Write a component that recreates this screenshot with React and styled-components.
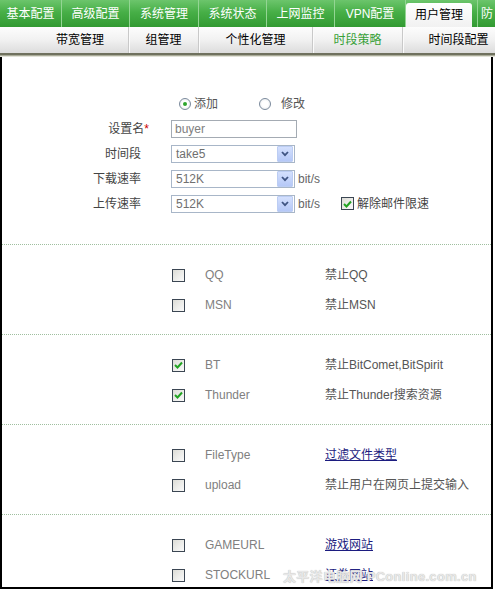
import styled, { createGlobalStyle, css } from 'styled-components'

const FONT = `"Liberation Sans", "Noto Sans CJK SC", sans-serif`

const GlobalStyle = createGlobalStyle`
    body {
        margin: 0;
        background: #fff;
        overflow: hidden;
    }
`

const Page = styled.div`
    position: relative;
    width: 495px;
    height: 589px;
    overflow: hidden;
    background: #fff;
    font-family: ${FONT};
    font-size: 12px;
    line-height: 1;
`

const TabBar = styled.div`
    display: flex;
    height: 27px;
    background: linear-gradient(#6cc56c, #47af47 45%, #329a32);
`

const Tab = styled.div`
    flex: 0 0 ${({ $w }) => $w}px;
    box-sizing: border-box;
    display: flex;
    align-items: center;
    justify-content: center;
    color: #fff;
    white-space: nowrap;
    overflow: hidden;
    border-right: 1px solid #93d593;
    ${({ $active }) => $active && css`
        margin-top: 3px;
        border-right: 0;
        border-radius: 3px 3px 0 0;
        color: #000;
        background: linear-gradient(#ffffff, #f1f1f1);
    `}
    ${({ $tail }) => $tail && css`
        margin-left: 5px;
        border-right: 0;
        border-left: 1px solid #93d593;
        justify-content: flex-start;
        padding-left: 3px;
    `}
`

const SubBar = styled.div`
    display: flex;
    height: 26px;
    padding-left: 32px;
    background: linear-gradient(#fdfdfd, #f1f1f1 50%, #dcdcdc);
`

const SubItem = styled.div`
    flex: 0 0 ${({ $w }) => $w}px;
    box-sizing: border-box;
    display: flex;
    align-items: center;
    justify-content: center;
    white-space: nowrap;
    color: ${({ $active }) => ($active ? '#37a037' : '#000')};
    ${({ $sep }) => $sep && css`
        border-left: 1px solid #c9c9c9;
        box-shadow: inset 1px 0 #fbfbfb;
    `}
`

const Shadow = styled.div`
    height: 4px;
    background: linear-gradient(#6f715e 0, #6f715e 2px, #a9ab98 2px, #a9ab98 3px, #e2e2d8 3px);
`

const Panel = styled.div`
    width: 493px;
    box-sizing: border-box;
    height: 532px;
    border: 2px solid #000;
    border-top: 0;
    overflow: hidden;
`

const Form = styled.div`
    padding: 34px 0 28px;
`

const Row = styled.div`
    display: flex;
    align-items: center;
    height: 25px;
`

const Label = styled.div`
    width: 139px;
    text-align: right;
    color: #444;
    white-space: nowrap;
`

const Star = styled.span`
    color: #c00;
    margin-right: -8px;
`

const Controls = styled.div`
    display: flex;
    align-items: center;
    margin-left: ${({ $indent }) => $indent ?? 30}px;
    color: #555;
`

const RadioDot = styled.span`
    box-sizing: border-box;
    width: 12px;
    height: 12px;
    border-radius: 50%;
    border: 1px solid #7b8a9c;
    background: radial-gradient(circle, #fff 40%, #dfe3e8);
    display: inline-flex;
    align-items: center;
    justify-content: center;
    &::after {
        content: '';
        width: 4px;
        height: 4px;
        border-radius: 50%;
        background: ${({ $on }) => ($on ? '#2ea52e' : 'transparent')};
    }
`

const RadioText = styled.span`
    margin-left: ${({ $gap }) => $gap}px;
    margin-right: ${({ $after }) => $after ?? 0}px;
    color: #555;
`

const TextBox = styled.div`
    box-sizing: border-box;
    width: 126px;
    height: 18px;
    border: 1px solid #a4abb3;
    padding-left: 3px;
    display: flex;
    align-items: center;
    color: #808080;
    font-size: 12px;
`

const SelectBox = styled.div`
    box-sizing: border-box;
    width: 124px;
    height: 18px;
    border: 1px solid #a8b6c8;
    display: flex;
    align-items: center;
    justify-content: space-between;
    padding-left: 4px;
    color: #707070;
`

const Arrow = styled.div`
    width: 14px;
    height: 14px;
    margin-right: 1px;
    border: 1px solid #bccdf3;
    border-radius: 1px;
    background: linear-gradient(#d4e0fd, #b5c8f7);
    display: flex;
    align-items: center;
    justify-content: center;
`

const Unit = styled.span`
    margin-left: 3px;
    color: #666;
`

const Box = styled.span`
    box-sizing: border-box;
    flex: 0 0 13px;
    width: 13px;
    height: 13px;
    border: 1px solid #3b4653;
    background: linear-gradient(135deg, #dcdcd6, #fbfbfb);
    display: inline-flex;
    align-items: center;
    justify-content: center;
`

const MailCheck = styled.label`
    display: flex;
    align-items: center;
    margin-left: 21px;
    color: #444;
    span + span {
        margin-left: 3px;
    }
`

const Section = styled.div`
    border-top: 1px dotted #9fbf9f;
    padding: 15px 0 14px;
`

const OptionRow = styled.div`
    display: grid;
    grid-template-columns: 13px 120px auto;
    column-gap: 20px;
    align-items: center;
    height: 30px;
    padding-left: 170px;
    white-space: nowrap;
`

const OptionName = styled.span`
    color: #808080;
`

const OptionDesc = styled.span`
    margin-left: -20px;
    color: #555;
`

const OptionLink = styled.a`
    margin-left: -20px;
    color: #1c1c80;
    text-decoration: underline;
`

const Watermark = styled.div`
    position: absolute;
    left: 283px;
    top: 570px;
    font-size: 13px;
    font-weight: bold;
    color: #e8e8e8;
    text-shadow: 0 0 1px #a8a8a8;
    white-space: nowrap;
    letter-spacing: 0.3px;
`

function Tick() {
    return (
        <svg width="9" height="8" viewBox="0 0 9 8">
            <path d="M1 4 L3.5 6.5 L8 1.5" fill="none" stroke="#22a322" strokeWidth="2" />
        </svg>
    )
}

function CheckBox({ checked }) {
    return <Box>{checked && <Tick />}</Box>
}

function Select({ value }) {
    return (
        <SelectBox>
            {value}
            <Arrow>
                <svg width="8" height="6" viewBox="0 0 8 6">
                    <path d="M1 1 L4 4.2 L7 1" fill="none" stroke="#3f5482" strokeWidth="1.8" />
                </svg>
            </Arrow>
        </SelectBox>
    )
}

const tabs = [
    { text: '基本配置', w: 62 },
    { text: '高级配置', w: 68 },
    { text: '系统管理', w: 69 },
    { text: '系统状态', w: 68 },
    { text: '上网监控', w: 68 },
    { text: 'VPN配置', w: 71 },
]

const subs = [
    { text: '带宽管理', w: 96 },
    { text: '组管理', w: 70 },
    { text: '个性化管理', w: 114 },
    { text: '时段策略', w: 90, active: true },
    { text: '时间段配置', w: 112 },
]

const sections = [
    [
        { name: 'QQ', desc: '禁止QQ' },
        { name: 'MSN', desc: '禁止MSN' },
    ],
    [
        { name: 'BT', desc: '禁止BitComet,BitSpirit', checked: true },
        { name: 'Thunder', desc: '禁止Thunder搜索资源', checked: true },
    ],
    [
        { name: 'FileType', link: '过滤文件类型' },
        { name: 'upload', desc: '禁止用户在网页上提交输入' },
    ],
    [
        { name: 'GAMEURL', link: '游戏网站' },
        { name: 'STOCKURL', link: '证券网站' },
    ],
]

function App() {
    return (
        <Page>
            <GlobalStyle />
            <TabBar>
                {tabs.map((t) => (
                    <Tab key={t.text} $w={t.w}>{t.text}</Tab>
                ))}
                <Tab $w={66} $active>用户管理</Tab>
                <Tab $w={30} $tail>防</Tab>
            </TabBar>
            <SubBar>
                {subs.map((s, i) => (
                    <SubItem key={s.text} $w={s.w} $sep={i > 0} $active={s.active}>{s.text}</SubItem>
                ))}
            </SubBar>
            <Shadow />
            <Panel>
                <Form>
                    <Row>
                        <Label />
                        <Controls $indent={38}>
                            <RadioDot $on />
                            <RadioText $gap={3} $after={41}>添加</RadioText>
                            <RadioDot />
                            <RadioText $gap={10}>修改</RadioText>
                        </Controls>
                    </Row>
                    <Row>
                        <Label>设置名<Star>*</Star></Label>
                        <Controls>
                            <TextBox>buyer</TextBox>
                        </Controls>
                    </Row>
                    <Row>
                        <Label>时间段</Label>
                        <Controls>
                            <Select value="take5" />
                        </Controls>
                    </Row>
                    <Row>
                        <Label>下载速率</Label>
                        <Controls>
                            <Select value="512K" />
                            <Unit>bit/s</Unit>
                        </Controls>
                    </Row>
                    <Row>
                        <Label>上传速率</Label>
                        <Controls>
                            <Select value="512K" />
                            <Unit>bit/s</Unit>
                            <MailCheck>
                                <CheckBox checked />
                                <span>解除邮件限速</span>
                            </MailCheck>
                        </Controls>
                    </Row>
                </Form>
                {sections.map((rows, i) => (
                    <Section key={i}>
                        {rows.map((r) => (
                            <OptionRow key={r.name}>
                                <CheckBox checked={r.checked} />
                                <OptionName>{r.name}</OptionName>
                                {r.link
                                    ? <OptionLink href="#">{r.link}</OptionLink>
                                    : <OptionDesc>{r.desc}</OptionDesc>}
                            </OptionRow>
                        ))}
                    </Section>
                ))}
            </Panel>
            <Watermark>太平洋电脑网 PConline.com.cn</Watermark>
        </Page>
    )
}

export default App
